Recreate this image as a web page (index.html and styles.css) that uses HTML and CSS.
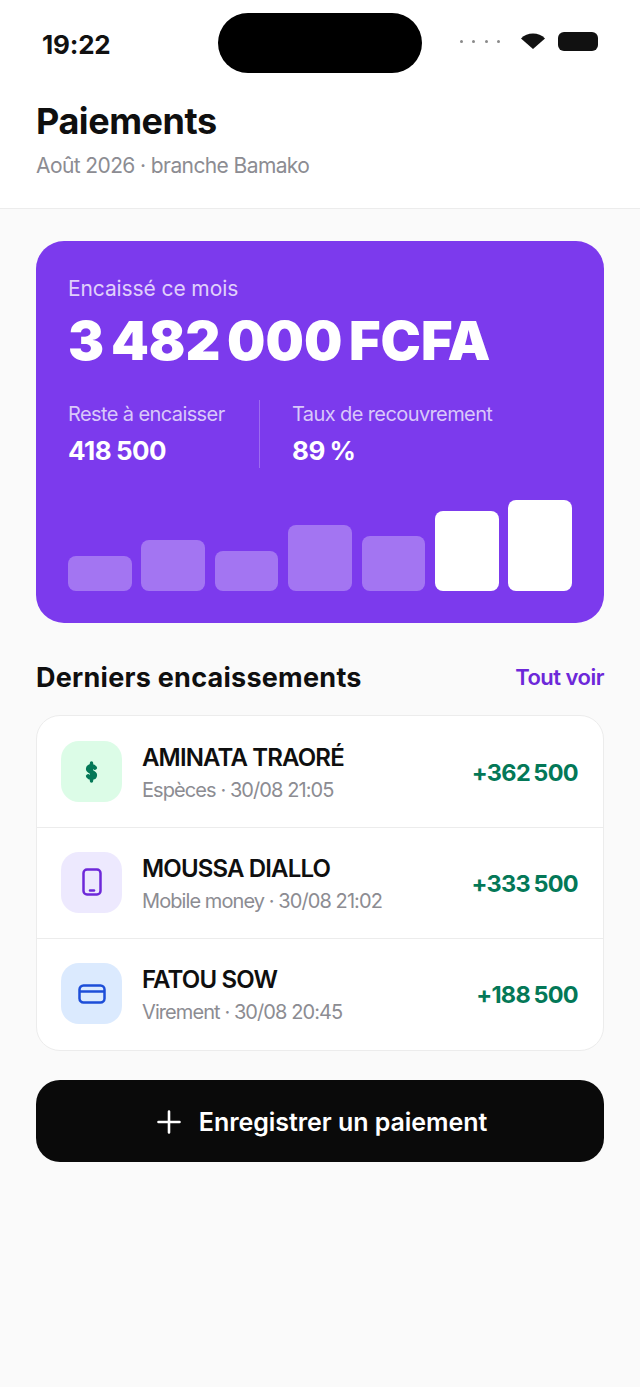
FILE: index.html
```html
<!DOCTYPE html>
<html lang="fr">
<head>
    <meta charset="UTF-8">
    <meta name="viewport" content="width=device-width, initial-scale=1.0">
    <title>Paiements</title>
    <link rel="stylesheet" href="styles.css">
</head>
<body>
    <header class="top">
        <div class="status">
            <span class="time">19:22</span>
            <div class="island"></div>
            <div class="status-icons">
                <div class="dots"><i></i><i></i><i></i><i></i></div>
                <svg class="wifi" width="24" height="16" viewBox="0 0 24 16"><path d="M0 5.500C3 2 7.500 0.500 12 0.500S21 2 24 5.500L12 16Z" fill="#111"/></svg>
                <div class="battery"></div>
            </div>
        </div>
        <div class="heading">
            <h1>Paiements</h1>
            <p>Août 2026 · branche Bamako</p>
        </div>
    </header>

    <main class="content">
        <section class="hero">
            <div class="hero-label">Encaissé ce mois</div>
            <div class="hero-amount">3 482 000 FCFA</div>
            <div class="stats">
                <div class="stat">
                    <div class="stat-label">Reste à encaisser</div>
                    <div class="stat-value">418 500</div>
                </div>
                <div class="stat stat-right">
                    <div class="stat-label">Taux de recouvrement</div>
                    <div class="stat-value">89 %</div>
                </div>
            </div>
            <div class="bars">
                <div class="bar" style="height: 35px"></div>
                <div class="bar" style="height: 51px"></div>
                <div class="bar" style="height: 40px"></div>
                <div class="bar" style="height: 66px"></div>
                <div class="bar" style="height: 55px"></div>
                <div class="bar bar-on" style="height: 80px"></div>
                <div class="bar bar-on" style="height: 91px"></div>
            </div>
        </section>

        <div class="section-head">
            <h2>Derniers encaissements</h2>
            <a class="see-all">Tout voir</a>
        </div>

        <section class="list">
            <div class="row">
                <div class="icon icon-green">
                    <svg width="16" height="22" viewBox="0 0 16 22" fill="none" stroke="#047857" stroke-linecap="round"><path d="M7.500 2V20" stroke-width="3.400"/><path d="M11 6.800C10.300 5.700 9 5.200 7.500 5.200 5.400 5.200 4 6.200 4 8 4 11.200 11 10.800 11 14 11 15.800 9.600 16.800 7.500 16.800 6 16.800 4.700 16.300 4 15.200" stroke-width="4.200"/></svg>
                </div>
                <div class="who">
                    <div class="name">AMINATA TRAORÉ</div>
                    <div class="meta">Espèces · 30/08 21:05</div>
                </div>
                <div class="amount">+362 500</div>
            </div>
            <div class="row">
                <div class="icon icon-violet">
                    <svg width="20" height="28" viewBox="0 0 20 28" fill="none" stroke="#6d28d9" stroke-width="2.500" stroke-linecap="round"><rect x="1.500" y="1.500" width="17" height="25" rx="3.500"/><path d="M8 22.500H12"/></svg>
                </div>
                <div class="who">
                    <div class="name">MOUSSA DIALLO</div>
                    <div class="meta">Mobile money · 30/08 21:02</div>
                </div>
                <div class="amount">+333 500</div>
            </div>
            <div class="row">
                <div class="icon icon-blue">
                    <svg width="28" height="20" viewBox="0 0 28 20" fill="none" stroke="#1d4ed8" stroke-width="2.500"><rect x="1.500" y="1.500" width="25" height="17" rx="4"/><path d="M1.500 7.500H26.500"/></svg>
                </div>
                <div class="who">
                    <div class="name">FATOU SOW</div>
                    <div class="meta">Virement · 30/08 20:45</div>
                </div>
                <div class="amount">+188 500</div>
            </div>
        </section>

        <button class="add">
            <svg width="24" height="24" viewBox="0 0 24 24" fill="none" stroke="#fff" stroke-width="2.600" stroke-linecap="round"><path d="M12 1.500V22.500M1.500 12H22.500"/></svg>
            Enregistrer un paiement
        </button>
    </main>
</body>
</html>
```

FILE: styles.css
```css
* {
    box-sizing: border-box;
}

body {
    margin: 0;
    min-height: 100vh;
    background-color: #fafafa;
    color: #0f0f0f;
    font-family: Inter, "Liberation Sans", sans-serif;
}

.top {
    background-color: #fff;
    border-bottom: 1px solid #ececec;
    height: 209px;
}

.status {
    display: grid;
    grid-template-columns: 1fr 204px 1fr;
    align-items: center;
    height: 86px;
    padding: 0 42px;
}

.time {
    font-size: 26px;
    font-weight: 700;
    color: #111;
    padding-top: 2px;
    letter-spacing: -0.2px;
}

.island {
    height: 60px;
    border-radius: 30px;
    background-color: #000;
}

.status-icons {
    display: flex;
    justify-content: flex-end;
    align-items: center;
    height: 24px;
    margin-bottom: 4px;
}

.dots {
    display: flex;
    gap: 9.500px;
    margin-right: 21px;
}

.dots i {
    width: 3px;
    height: 3px;
    border-radius: 50%;
    background-color: #8a8a8a;
}

.wifi {
    margin-right: 13px;
}

.battery {
    width: 40px;
    height: 19px;
    border-radius: 6px;
    background-color: #111;
}

.heading {
    padding: 14px 36px 0;
}

h1 {
    margin: 0;
    font-size: 36px;
    line-height: 42px;
    font-weight: 700;
    letter-spacing: -0.45px;
}

.heading p {
    margin: 11px 0 0;
    font-size: 21px;
    line-height: 26px;
    color: #8c8c92;
    letter-spacing: -0.6px;
}

.content {
    padding: 32px 36px;
}

.hero {
    height: 382px;
    padding: 32px;
    border-radius: 28px;
    background-color: #7c3aed;
    color: #fff;
    display: flex;
    flex-direction: column;
}

.hero-label {
    font-size: 21px;
    line-height: 30px;
    color: #e0d0fb;
    letter-spacing: -0.1px;
    padding-top: 1px;
}

.hero-amount {
    margin-top: 6px;
    font-size: 54px;
    line-height: 62px;
    font-weight: 900;
    letter-spacing: 0;
    word-spacing: -4px;
    white-space: nowrap;
}

.stats {
    display: flex;
    margin-top: 28px;
}

.stat {
    width: 191px;
    height: 68px;
}

.stat-right {
    width: auto;
    padding-left: 32px;
    border-left: 1px solid rgba(255, 255, 255, 0.25);
}

.stat-label {
    font-size: 20px;
    line-height: 28px;
    color: #d9c8fa;
    letter-spacing: -0.6px;
}

.stat-value {
    margin-top: 7px;
    font-size: 26px;
    line-height: 32px;
    font-weight: 700;
    letter-spacing: -0.5px;
    word-spacing: -1px;
}

.bars {
    display: flex;
    align-items: flex-end;
    gap: 9.670px;
    margin-top: auto;
}

.bar {
    flex: 1;
    border-radius: 8px;
    background-color: rgba(255, 255, 255, 0.3);
}

.bar-on {
    background-color: #fff;
}

.section-head {
    display: flex;
    justify-content: space-between;
    align-items: center;
    margin-top: 36px;
    height: 36px;
}

h2 {
    margin: 0;
    font-size: 27px;
    font-weight: 700;
    letter-spacing: 0.25px;
}

.see-all {
    font-size: 22px;
    font-weight: 600;
    color: #6d28d9;
    letter-spacing: -0.5px;
}

.list {
    margin-top: 20px;
    background-color: #fff;
    border: 1px solid #ececec;
    border-radius: 24px;
}

.row {
    display: flex;
    align-items: center;
    height: 111px;
    padding: 0 25px 2px 24px;
    border-bottom: 1px solid #ececec;
}

.row:first-child {
    height: 112px;
    padding-bottom: 0;
}

.row:last-child {
    border-bottom: none;
}

.icon {
    display: flex;
    justify-content: center;
    align-items: center;
    width: 61px;
    height: 61px;
    margin-right: 20px;
    border-radius: 18px;
}

.icon-green {
    background-color: #dcfce7;
}

.icon-violet {
    background-color: #ede9fe;
}

.icon-blue {
    background-color: #dbeafe;
}

.who {
    flex: 1;
    padding-top: 3px;
}

.name {
    font-size: 24px;
    line-height: 30px;
    font-weight: 600;
    letter-spacing: -0.85px;
}

.meta {
    margin-top: 4px;
    font-size: 20px;
    line-height: 26px;
    color: #8c8c92;
    letter-spacing: -0.92px;
}

.amount {
    padding-top: 2px;
    font-size: 23.500px;
    font-weight: 700;
    color: #047857;
    letter-spacing: -0.7px;
    word-spacing: -1.500px;
}

.add {
    display: flex;
    justify-content: center;
    align-items: center;
    gap: 18px;
    width: 100%;
    height: 82px;
    margin-top: 29px;
    padding: 2px 0 0 4px;
    border: none;
    border-radius: 24px;
    background-color: #0a0a0a;
    color: #fff;
    font-family: inherit;
    font-size: 25px;
    font-weight: 600;
    letter-spacing: -0.05px;
}
```
